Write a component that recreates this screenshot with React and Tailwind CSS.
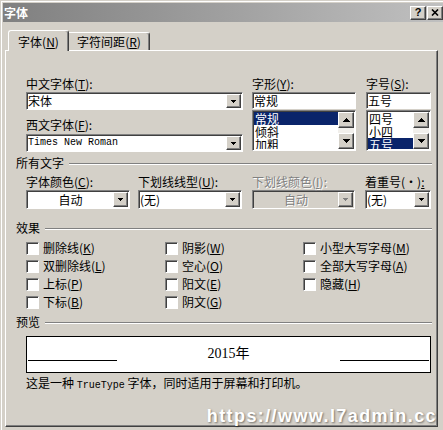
import React from 'react';

const cjk = "font-['Noto_Sans_CJK_SC',sans-serif]";
const mono = "font-['Liberation_Mono',monospace]";

// classic 3D edges
const raised =
  'bg-[#d4d0c8] border border-t-white border-l-white border-r-[#404040] border-b-[#404040] shadow-[inset_-1px_-1px_0_#808080]';
const sunken =
  'border border-t-[#808080] border-l-[#808080] border-r-white border-b-white shadow-[inset_1px_1px_0_#404040]';

const SmallArrow = ({ color = '#000' }) => (
  <svg width="5" height="3" viewBox="0 0 5 3" className="block">
    <path d="M0 0h5v1h-1v1h-1v1h-1v-1h-1v-1H0z" fill={color} />
  </svg>
);

const ScrollArrow = ({ up }) => (
  <svg width="7" height="4" viewBox="0 0 7 4" className="block">
    {up ? (
      <path d="M3 0h1v1h1v1h1v1h1v1H0v-1h1v-1h1v-1h1z" fill="#000" />
    ) : (
      <path d="M0 0h7v1h-1v1h-1v1h-1v1h-1v-1h-1v-1h-1v-1H0z" fill="#000" />
    )}
  </svg>
);

const Key = ({ k }) => (
  <>
    (<span className="underline underline-offset-[1px]">{k}</span>)
  </>
);

const Label = ({ children, className = '', dim = false }) => (
  <div
    className={`h-[14px] leading-[14px] whitespace-nowrap ${
      dim ? 'text-[#808080] [text-shadow:1px_1px_0_#fff]' : ''
    } ${className}`}
  >
    {children}
  </div>
);

const Combo = ({ children, className = '', disabled = false, center = false, textClass = '' }) => (
  <div className={`${sunken} ${disabled ? 'bg-[#d4d0c8]' : 'bg-white'} flex p-[1px] ${className}`}>
    <div
      className={`flex-1 flex items-center whitespace-nowrap leading-[14px] ${
        center ? 'justify-center' : ''
      } ${disabled ? 'text-[#808080] [text-shadow:1px_1px_0_#fff]' : ''} ${textClass}`}
    >
      {children}
    </div>
    <div className={`${raised} w-[15px] flex items-center justify-center`}>
      <SmallArrow color={disabled ? '#808080' : '#000'} />
    </div>
  </div>
);

const Field = ({ children }) => (
  <div className={`${sunken} bg-white mt-[1px] h-[17px] flex items-center pl-[1px] leading-[13px]`}>
    {children}
  </div>
);

const ListBox = ({ items, sel }) => (
  <div className={`${sunken} bg-white mt-[1px] h-[41px] flex p-[1px]`}>
    <div className="flex-1 overflow-hidden">
      {items.map((it, i) => (
        <div
          key={it}
          className={`h-[13px] leading-[13px] pl-[1px] ${i === sel ? 'bg-[#0a246a] text-white' : ''}`}
        >
          {it}
        </div>
      ))}
    </div>
    <div className="w-[16px] flex flex-col bg-[#f1efeb]">
      <div className={`${raised} h-[16px] flex items-center justify-center`}>
        <ScrollArrow up />
      </div>
      <div className="flex-1" />
      <div className={`${raised} h-[16px] flex items-center justify-center`}>
        <ScrollArrow />
      </div>
    </div>
  </div>
);

const Section = ({ title, className = '' }) => (
  <div className={`flex items-center h-[14px] ${className}`}>
    <span className="leading-[14px]">{title}</span>
    <div className="flex-1 ml-[5px] mt-[2px] border-t border-t-[#808080] border-b border-b-white" />
  </div>
);

const Check = ({ label, k }) => (
  <div className="flex items-center h-[18px] gap-[4px] whitespace-nowrap">
    <div className={`w-[13px] h-[13px] bg-white ${sunken}`} />
    <span className="leading-[14px]">
      {label}
      <Key k={k} />
    </span>
  </div>
);

export default function App() {
  return (
    <div
      className={`relative w-[443px] h-[430px] overflow-hidden bg-[#d4d0c8] pt-[3px] pl-[3px] text-[12px] text-black ${cjk} shadow-[inset_1px_1px_0_#d4d0c8,inset_2px_2px_0_#ffffff]`}
    >
      {/* Title bar */}
      <div className="h-[19px] flex items-center bg-gradient-to-r from-[#808080] to-[#c0c0c0] pl-[1px]">
        <span className="font-bold text-white leading-[19px]">字体</span>
        <div className="ml-auto flex gap-[1px]">
          <div className={`${raised} w-[16px] h-[14px] flex items-center justify-center`}>
            <span className="font-['Liberation_Sans',sans-serif] font-bold text-[11px] leading-none">?</span>
          </div>
          <div className={`${raised} w-[16px] h-[14px] flex items-center justify-center`}>
            <svg width="8" height="7" viewBox="0 0 8 7">
              <path d="M1 0.5L7 6.5M7 0.5L1 6.5" stroke="#000" strokeWidth="1.6" />
            </svg>
          </div>
        </div>
      </div>

      <div className="ml-[2px]">
        {/* Tabs */}
        <div className="mt-[8px] h-[20px] flex items-end pl-[3px]">
          <div className="relative z-10 -mb-px h-[21px] w-[61px] bg-[#d4d0c8] border-t border-l border-r border-t-white border-l-white border-r-[#404040] rounded-t-[3px] shadow-[inset_-1px_0_0_#808080] flex items-center justify-center pt-[1px]">
            字体
            <Key k="N" />
          </div>
          <div className="h-[18px] w-[81px] border-t border-r border-t-white border-r-[#404040] rounded-tr-[3px] shadow-[inset_-1px_0_0_#808080] flex items-center justify-center">
            字符间距
            <Key k="R" />
          </div>
        </div>

        {/* Tab panel */}
        <div className={`${raised} h-[377px] w-[433px] pl-[10px] pr-[5px] pt-[26px]`}>
          {/* Font pickers */}
          <div className="flex pl-[10px]">
            <div className="w-[217px]">
              <Label>
                中文字体
                <Key k="T" />:
              </Label>
              <Combo className="mt-[1px] h-[18px]">宋体</Combo>
              <Label className="mt-[8px]">
                西文字体
                <Key k="F" />:
              </Label>
              <Combo className="mt-[2px] h-[18px]" textClass={`${mono} text-[10px]`}>
                Times New Roman
              </Combo>
            </div>
            <div className="ml-[9px] w-[104px]">
              <Label>
                字形
                <Key k="Y" />:
              </Label>
              <Field>常规</Field>
              <ListBox items={['常规', '倾斜', '加粗']} sel={0} />
            </div>
            <div className="ml-[10px] w-[65px]">
              <Label>
                字号
                <Key k="S" />:
              </Label>
              <Field>五号</Field>
              <ListBox items={['四号', '小四', '五号']} sel={2} />
            </div>
          </div>

          <Section title="所有文字" className="mt-[4px]" />

          <div className="flex pl-[10px] mt-[5px]">
            <div className="w-[104px]">
              <Label>
                字体颜色
                <Key k="C" />:
              </Label>
              <Combo className="mt-[1px] h-[19px]" center>
                自动
              </Combo>
            </div>
            <div className="ml-[8px] w-[104px]">
              <Label>
                下划线线型
                <Key k="U" />:
              </Label>
              <Combo className="mt-[1px] h-[19px]">(无)</Combo>
            </div>
            <div className="ml-[10px] w-[103px]">
              <Label dim>
                下划线颜色
                <Key k="I" />:
              </Label>
              <Combo className="mt-[1px] h-[19px]" center disabled>
                自动
              </Combo>
            </div>
            <div className="ml-[10px] w-[66px]">
              <Label>
                着重号(·)<span className="underline underline-offset-[1px]">:</span>
              </Label>
              <Combo className="mt-[1px] h-[19px]">(无)</Combo>
            </div>
          </div>

          <Section title="效果" className="mt-[12px]" />

          <div className="mt-[4px] pl-[10px] grid grid-cols-[139px_138px_1fr] grid-rows-[repeat(4,18px)] grid-flow-col">
            <Check label="删除线" k="K" />
            <Check label="双删除线" k="L" />
            <Check label="上标" k="P" />
            <Check label="下标" k="B" />
            <Check label="阴影" k="W" />
            <Check label="空心" k="O" />
            <Check label="阳文" k="E" />
            <Check label="阴文" k="G" />
            <Check label="小型大写字母" k="M" />
            <Check label="全部大写字母" k="A" />
            <Check label="隐藏" k="H" />
          </div>

          <Section title="预览" className="mt-[4px]" />

          <div className="ml-[10px] mr-[1px] mt-[7px] h-[37px] border border-black bg-white flex items-end pb-[11px] px-[1px]">
            <div className="w-[89px] border-b border-black" />
            <div className="flex-1 text-center font-['Liberation_Serif','Noto_Sans_CJK_SC',serif] text-[14px] leading-[14px]">
              2015年
            </div>
            <div className="w-[89px] border-b border-black" />
          </div>

          <div className="ml-[10px] mt-[3px] h-[14px] leading-[14px] whitespace-nowrap">
            这是一种 <span className={`${mono} text-[10px]`}>TrueType</span> 字体，同时适用于屏幕和打印机。
          </div>
        </div>
      </div>

      {/* watermark over the dialog */}
      <div className="absolute top-[406px] right-[6px] font-['Liberation_Sans',sans-serif] font-bold text-[18px] leading-[20px] tracking-[1.4px] text-white [text-shadow:1px_1px_2px_rgba(0,0,0,0.45)]">
        https://www.l7admin.cc
      </div>
    </div>
  );
}
